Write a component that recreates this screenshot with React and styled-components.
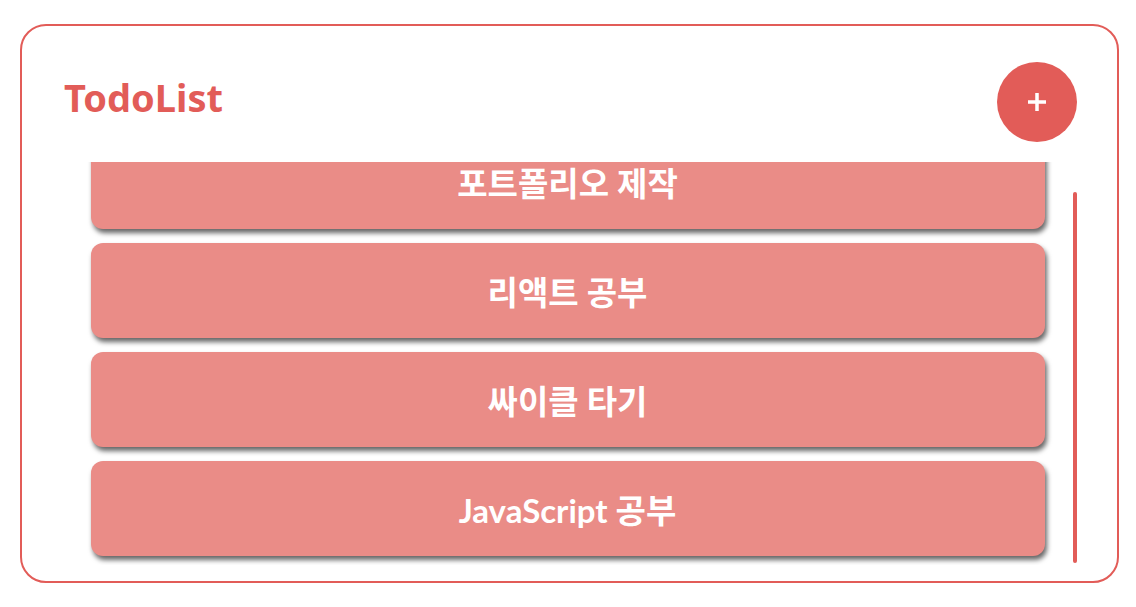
import React, { useLayoutEffect, useRef, useState } from 'react';
import styled, { createGlobalStyle } from 'styled-components';

const GlobalStyle = createGlobalStyle`
  html, body {
    margin: 0;
    padding: 0;
    background: #ffffff;
  }
  body {
    font-family: "Noto Sans", "Noto Sans CJK KR", sans-serif;
  }
`;

const red = '#e25c58';

const Card = styled.div`
  box-sizing: border-box;
  width: 1099px;
  height: 559px;
  margin: 24px 0 0 20px;
  border: 2px solid ${red};
  border-radius: 26px;
  padding: 0 40px 16px 42px;
  display: flex;
  flex-direction: column;
`;

const Header = styled.div`
  display: flex;
  justify-content: space-between;
  align-items: flex-start;
  height: 136px;
  flex-shrink: 0;
`;

const Title = styled.h1`
  margin: 49px 0 0 0;
  font-size: 38px;
  line-height: 44px;
  font-weight: 700;
  color: ${red};
`;

const AddButton = styled.button`
  margin-top: 36px;
  width: 80px;
  height: 80px;
  border: none;
  border-radius: 50%;
  background: ${red};
  display: flex;
  align-items: center;
  justify-content: center;
  padding: 0;
  cursor: pointer;
`;

const ListArea = styled.div`
  flex: 1;
  min-height: 0;
  display: flex;
`;

const List = styled.div`
  flex: 1;
  overflow-y: scroll;
  scrollbar-width: none;
  padding: 9px 2px 9px 0;
  display: flex;
  flex-direction: column;
  align-items: center;
  gap: 14px;

  &::-webkit-scrollbar {
    display: none;
  }
`;

const Track = styled.div`
  position: relative;
  width: 4px;
  margin-bottom: 2px;
  flex-shrink: 0;
`;

const Thumb = styled.div`
  position: absolute;
  left: 0;
  width: 4px;
  border-radius: 2px;
  background: ${red};
`;

const Item = styled.div`
  flex-shrink: 0;
  width: 954px;
  height: 95px;
  border-radius: 12px;
  background: #ea8c87;
  box-shadow: 2px 4px 5px rgba(0, 0, 0, 0.6);
  display: flex;
  align-items: center;
  justify-content: center;
  color: #ffffff;
  font-family: "Lato", "Noto Sans CJK KR", sans-serif;
  font-size: 33px;
  font-weight: 700;
`;

const todos = ['포트폴리오 제작', '리액트 공부', '싸이클 타기', 'JavaScript 공부'];

const PlusIcon = () => (
  <svg width="22" height="22" viewBox="0 0 22 22">
    <path d="M11 2v18M2 11h18" stroke="#fff" strokeWidth="3.5" />
  </svg>
);

const App = () => {
  const listRef = useRef(null);
  const trackRef = useRef(null);
  const [thumb, setThumb] = useState({ top: 0, height: 0 });

  const updateThumb = () => {
    const el = listRef.current;
    const track = trackRef.current;
    if (!el || !track) return;
    const trackH = track.clientHeight;
    const height = Math.min(trackH, (el.clientHeight / el.scrollHeight) * trackH + 4);
    const top = Math.max(0, (el.scrollTop / el.scrollHeight) * trackH - 4);
    setThumb({ top, height });
  };

  useLayoutEffect(() => {
    const el = listRef.current;
    if (el) el.scrollTop = el.scrollHeight;
    updateThumb();
  }, []);

  return (
    <>
      <GlobalStyle />
      <Card>
        <Header>
          <Title>TodoList</Title>
          <AddButton aria-label="add">
            <PlusIcon />
          </AddButton>
        </Header>
        <ListArea>
          <List ref={listRef} onScroll={updateThumb}>
            {todos.map((todo) => (
              <Item key={todo}>{todo}</Item>
            ))}
          </List>
          <Track ref={trackRef}>
            <Thumb style={{ top: thumb.top, height: thumb.height }} />
          </Track>
        </ListArea>
      </Card>
    </>
  );
};

export default App;
